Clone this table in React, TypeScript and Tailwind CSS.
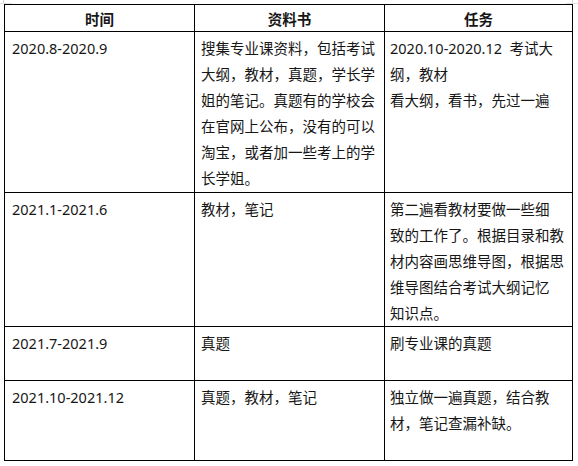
const rows = [
  {
    h: 'h-[161px]',
    time: '2020.8-2020.9',
    book: ['搜集专业课资料，包括考试', '大纲，教材，真题，学长学', '姐的笔记。真题有的学校会', '在官网上公布，没有的可以', '淘宝，或者加一些考上的学', '长学姐。'],
    task: ['2020.10-2020.12\u00a0\u00a0考试大', '纲，教材', '看大纲，看书，先过一遍'],
  },
  {
    h: 'h-[134px]',
    time: '2021.1-2021.6',
    book: ['教材，笔记'],
    task: ['第二遍看教材要做一些细', '致的工作了。根据目录和教', '材内容画思维导图，根据思', '维导图结合考试大纲记忆', '知识点。'],
  },
  {
    h: 'h-[54px]',
    time: '2021.7-2021.9',
    book: ['真题'],
    task: ['刷专业课的真题'],
  },
  {
    h: 'h-[80px]',
    time: '2021.10-2021.12',
    book: ['真题，教材，笔记'],
    task: ['独立做一遍真题，结合教', '材，笔记查漏补缺。'],
  },
];

function Lines({ lines }: { lines: string[] }) {
  return (
    <>
      {lines.map((l, i) => (
        <div key={i} className="whitespace-nowrap">{l}</div>
      ))}
    </>
  );
}

export default function App() {
  return (
    <div
      className="relative w-[578px] h-[466px] bg-white text-[#161616] pt-[4px] pl-[4px]"
      style={{ fontFamily: '"Noto Sans", "Noto Sans CJK SC", sans-serif' }}
    >
      {/* word table handles */}
      <div className="absolute left-[3px] top-0 w-px h-[4px] bg-[#d4d4d4]"></div>
      <div className="absolute left-0 top-[3px] w-[12px] h-px bg-[#e2e2e2]"></div>
      <div className="absolute left-[572px] top-0 w-px h-[4px] bg-[#d4d4d4]"></div>
      <div className="absolute left-[566px] top-[3px] w-[12px] h-px bg-[#e2e2e2]"></div>

      <div className="w-fit border-l border-t border-black grid grid-cols-[190px_190px_188px] text-[14.5px] leading-[26px]">
        <div className="h-[27px] border-r border-b border-black flex items-center justify-center pt-[2px] font-bold">时间</div>
        <div className="h-[27px] border-r border-b border-black flex items-center justify-center pt-[2px] font-bold">资料书</div>
        <div className="h-[27px] border-r border-b border-black flex items-center justify-center pt-[2px] font-bold">任务</div>
        {rows.map((r, i) => (
          <div key={i} className="contents">
            <div className={`${r.h} border-r border-b border-black pl-[7px] pt-[3px]`}>{r.time}</div>
            <div className={`${r.h} border-r border-b border-black pl-[6px] pt-[3px]`}>
              <Lines lines={r.book} />
            </div>
            <div className={`${r.h} border-r border-b border-black pl-[5px] pt-[3px]`}>
              <Lines lines={r.task} />
            </div>
          </div>
        ))}
      </div>
    </div>
  );
}
